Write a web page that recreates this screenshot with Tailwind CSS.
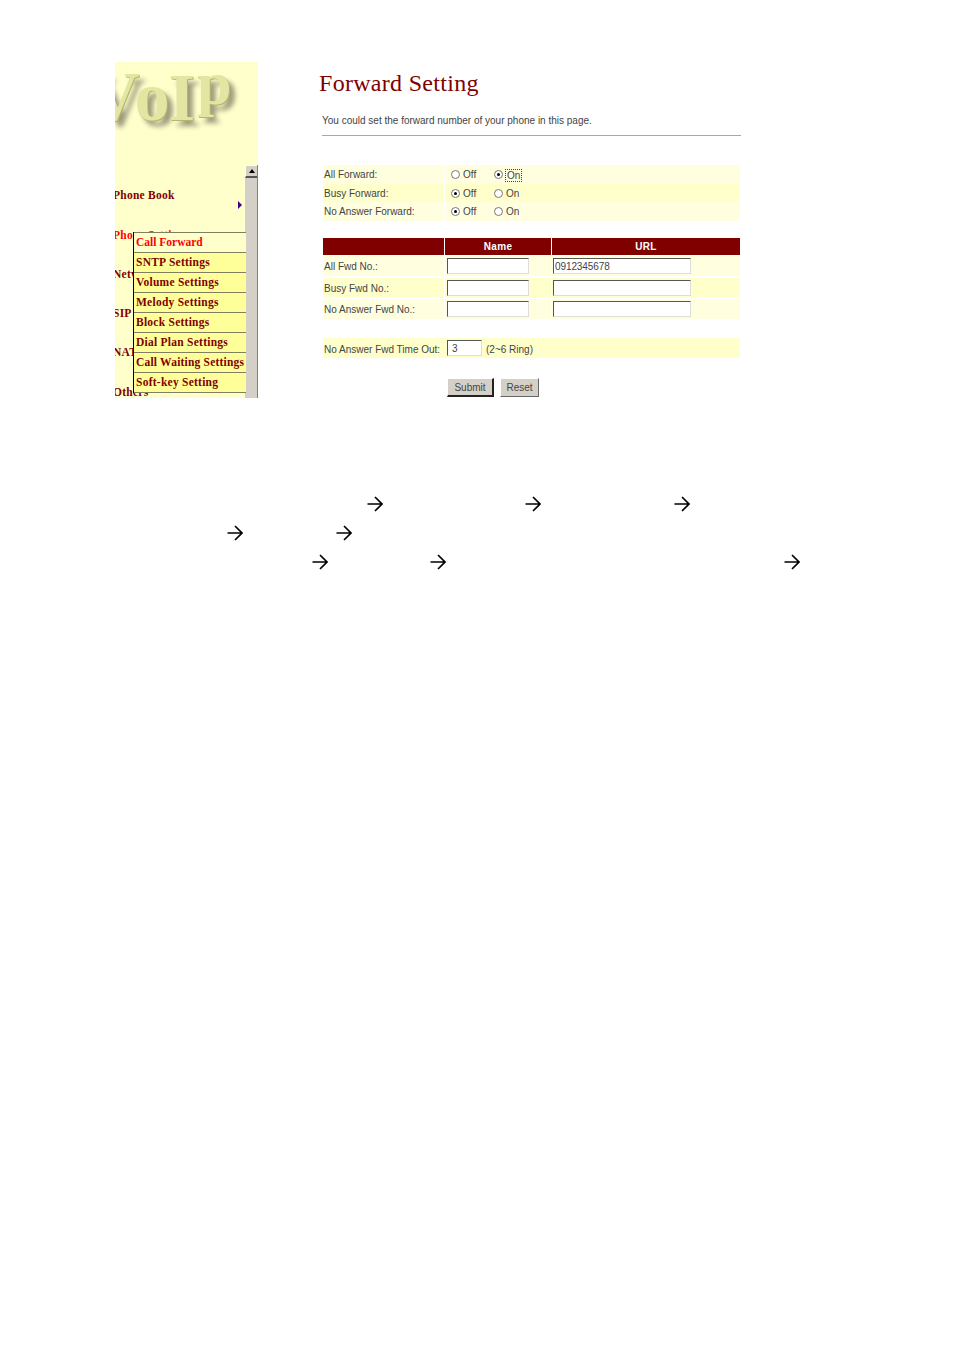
<!DOCTYPE html>
<html>
<head>
<meta charset="utf-8">
<script src="https://cdn.jsdelivr.net/npm/@tailwindcss/browser@4"></script>
</head>
<body class="bg-white w-[954px] h-[1350px] overflow-hidden font-['Liberation_Sans',Arial,sans-serif]">
<div class="flex pt-[62px] pl-[115px] h-[426px]">
  <!-- left frame -->
  <div class="relative w-[143px] h-[336px] bg-[#ffffcc] overflow-hidden font-['Liberation_Serif',serif] shrink-0">
    <div class="h-[103px] overflow-hidden">
      <div class="flex items-end h-[64px] mt-[3px] ml-[-26px] font-bold text-[#e2e6a2] [text-shadow:1px_1px_0_#b4b86c,6px_6px_5px_#9c9c7c] whitespace-nowrap">
        <span class="text-[70px] leading-[64px]">V</span>
        <span class="text-[70px] leading-[64px] -ml-[5px]">o</span>
        <span class="text-[68px] leading-[64px] -ml-[1px]">I</span>
        <span class="text-[62px] leading-[64px] ml-[2px] -translate-y-[14px]">p</span>
      </div>
    </div>
    <div class="flex flex-col ml-[-2px] text-[11.5px] font-bold leading-[14px] tracking-[0.25px] text-[#800000]">
      <div class="h-[40px] pt-[23px] box-content">Phone Book</div>
      <div class="h-[39px] text-[#ff0000]">Phone Settings</div>
      <div class="h-[39px]">Network</div>
      <div class="h-[39px]">SIP</div>
      <div class="h-[40px]">NAT</div>
      <div class="h-[14px]">Others</div>
    </div>
    <div class="absolute left-[123px] top-[139px] w-0 h-0 border-y-[4px] border-y-transparent border-l-[4px] border-l-[#400080]"></div>
    <!-- scrollbar -->
    <div class="absolute left-[130px] top-[103px] w-[13px] h-[233px] bg-[#d4d0c8] border-r border-r-[#808080] flex flex-col">
      <div class="h-[13px] bg-[#d4d0c8] border-t border-l border-t-white border-l-white border-b-2 border-b-[#555555] flex items-center justify-center">
        <span class="w-0 h-0 border-x-[3px] border-x-transparent border-b-[4px] border-b-black"></span>
      </div>
    </div>
    <!-- fly-out menu -->
    <div class="absolute left-[18px] top-[170px] w-[113px] border-l border-l-black font-bold text-[11.5px] tracking-[0.25px] text-[#800000] flex flex-col bg-[#ffff99]">
      <div class="h-[20px] border-t border-[#808060] pl-[2px] leading-[19px] bg-[#ffffcc] text-[#ff0000] tracking-normal">Call Forward</div>
      <div class="h-[20px] border-t border-[#808060] pl-[2px] leading-[19px]">SNTP Settings</div>
      <div class="h-[20px] border-t border-[#808060] pl-[2px] leading-[19px]">Volume Settings</div>
      <div class="h-[20px] border-t border-[#808060] pl-[2px] leading-[19px]">Melody Settings</div>
      <div class="h-[20px] border-t border-[#808060] pl-[2px] leading-[19px]">Block Settings</div>
      <div class="h-[20px] border-t border-[#808060] pl-[2px] leading-[19px]">Dial Plan Settings</div>
      <div class="h-[20px] border-t border-[#808060] pl-[2px] leading-[19px] whitespace-nowrap tracking-[0.2px]">Call Waiting Settings</div>
      <div class="h-[21px] border-y border-[#808060] pl-[2px] leading-[19px]">Soft-key Setting</div>
    </div>
  </div>
  <!-- right frame -->
  <div class="ml-[62px] w-[421px] text-[10px] text-[#444444]">
    <h1 class="font-['Liberation_Serif',serif] text-[24px] leading-[28px] text-[#800000] tracking-[0.3px] mt-[7px] -ml-px">Forward Setting</h1>
    <p class="mt-[17px] ml-[2px] leading-[14px]">You could set the forward number of your phone in this page.</p>
    <div class="mt-[7px] ml-[2px] h-px bg-[#a8a8a8] w-[419px]"></div>

    <div class="mt-[29px] ml-[3px] w-[417px] flex flex-col gap-px">
      <div class="grid grid-cols-[121px_1fr] gap-px h-[18px] leading-[20px]">
        <div class="bg-[#ffffe0] pl-px">All Forward:</div>
        <div class="bg-[#ffffe0] flex items-center pl-[6px]">
          <span class="w-[9px] h-[9px] rounded-full border border-[#777777] bg-white mt-[-1px]"></span><span class="ml-[3px] w-[31px]">Off</span>
          <span class="w-[9px] h-[9px] rounded-full border border-[#777777] bg-white mt-[-1px] flex items-center justify-center"><span class="w-[3px] h-[3px] rounded-full bg-black"></span></span><span class="ml-[2px] px-px h-[13px] leading-[12px] border border-dotted border-[#444444]">On</span>
        </div>
      </div>
      <div class="grid grid-cols-[121px_1fr] gap-px h-[17px] leading-[19px]">
        <div class="bg-[#ffffcc] pl-px">Busy Forward:</div>
        <div class="bg-[#ffffcc] flex items-center pl-[6px]">
          <span class="w-[9px] h-[9px] rounded-full border border-[#777777] bg-white mt-[-1px] flex items-center justify-center"><span class="w-[3px] h-[3px] rounded-full bg-black"></span></span><span class="ml-[3px] w-[31px]">Off</span>
          <span class="w-[9px] h-[9px] rounded-full border border-[#777777] bg-white mt-[-1px]"></span><span class="ml-[2px] px-px">On</span>
        </div>
      </div>
      <div class="grid grid-cols-[121px_1fr] gap-px h-[17px] leading-[19px]">
        <div class="bg-[#ffffe0] pl-px">No Answer Forward:</div>
        <div class="bg-[#ffffe0] flex items-center pl-[6px]">
          <span class="w-[9px] h-[9px] rounded-full border border-[#777777] bg-white mt-[-1px] flex items-center justify-center"><span class="w-[3px] h-[3px] rounded-full bg-black"></span></span><span class="ml-[3px] w-[31px]">Off</span>
          <span class="w-[9px] h-[9px] rounded-full border border-[#777777] bg-white mt-[-1px]"></span><span class="ml-[2px] px-px">On</span>
        </div>
      </div>
    </div>

    <div class="mt-[19px] ml-[3px] w-[417px] grid grid-cols-[121px_106px_188px] gap-x-px">
      <div class="h-[17px] bg-[#800000]"></div>
      <div class="h-[17px] bg-[#800000] text-white font-bold text-center leading-[17px] tracking-[0.35px]">Name</div>
      <div class="h-[17px] bg-[#800000] text-white font-bold text-center leading-[17px] tracking-[0.35px]">URL</div>

      <div class="mt-px h-[20px] bg-[#ffffe0] pl-px leading-[22px]">All Fwd No.:</div>
      <div class="mt-px h-[20px] bg-[#ffffe0] pl-[2px] pt-[2px]"><div class="w-[82px] h-[16px] bg-white border-t border-l border-t-[#555555] border-l-[#555555] border-r border-b border-r-[#dddddd] border-b-[#dddddd]"></div></div>
      <div class="mt-px h-[20px] bg-[#ffffe0] pl-px pt-[2px]"><div class="w-[138px] h-[16px] bg-white border-t border-l border-t-[#555555] border-l-[#555555] border-r border-b border-r-[#dddddd] border-b-[#dddddd] leading-[15px] -tracking-[0.1px] pl-px">0912345678</div></div>

      <div class="mt-[2px] h-[20px] bg-[#ffffcc] pl-px leading-[22px]">Busy Fwd No.:</div>
      <div class="mt-[2px] h-[20px] bg-[#ffffcc] pl-[2px] pt-[2px]"><div class="w-[82px] h-[16px] bg-white border-t border-l border-t-[#555555] border-l-[#555555] border-r border-b border-r-[#dddddd] border-b-[#dddddd]"></div></div>
      <div class="mt-[2px] h-[20px] bg-[#ffffcc] pl-px pt-[2px]"><div class="w-[138px] h-[16px] bg-white border-t border-l border-t-[#555555] border-l-[#555555] border-r border-b border-r-[#dddddd] border-b-[#dddddd]"></div></div>

      <div class="mt-px h-[20px] bg-[#ffffe0] pl-px leading-[22px]">No Answer Fwd No.:</div>
      <div class="mt-px h-[20px] bg-[#ffffe0] pl-[2px] pt-[2px]"><div class="w-[82px] h-[16px] bg-white border-t border-l border-t-[#555555] border-l-[#555555] border-r border-b border-r-[#dddddd] border-b-[#dddddd]"></div></div>
      <div class="mt-px h-[20px] bg-[#ffffe0] pl-px pt-[2px]"><div class="w-[138px] h-[16px] bg-white border-t border-l border-t-[#555555] border-l-[#555555] border-r border-b border-r-[#dddddd] border-b-[#dddddd]"></div></div>
    </div>

    <div class="mt-[19px] ml-[3px] w-[417px] h-[20px] bg-[#ffffcc] flex items-center">
      <div class="w-[124px] pl-px whitespace-nowrap mt-[2px]">No Answer Fwd Time Out:</div>
      <div class="w-[35px] h-[16px] bg-white border-t border-l border-t-[#555555] border-l-[#555555] border-r border-b border-r-[#dddddd] border-b-[#dddddd] leading-[16px] pl-[4px]">3</div>
      <div class="ml-[4px] mt-[3px]">(2~6 Ring)</div>
    </div>

    <div class="mt-[20px] ml-[127px] flex gap-[6px]">
      <div class="w-[47px] h-[19px] bg-[#d4d0c8] border border-t-white border-l-white border-r-2 border-b-2 border-r-[#222222] border-b-[#222222] text-center leading-[17px]">Submit</div>
      <div class="w-[39px] h-[19px] bg-[#d4d0c8] border border-t-white border-l-white border-r-[#666666] border-b-[#666666] text-center leading-[17px]">Reset</div>
    </div>
  </div>
</div>

<!-- arrows -->
<div class="flex flex-col gap-[13px] pt-[70px]">
  <div class="flex h-[16px] text-black">
    <svg class="ml-[367px]" width="16" height="16" viewBox="0 0 16 16" fill="none" stroke="currentColor" stroke-width="1.7"><path d="M0.5 8H15M8 1l7 7-7 7"/></svg>
    <svg class="ml-[142px]" width="16" height="16" viewBox="0 0 16 16" fill="none" stroke="currentColor" stroke-width="1.7"><path d="M0.5 8H15M8 1l7 7-7 7"/></svg>
    <svg class="ml-[133px]" width="16" height="16" viewBox="0 0 16 16" fill="none" stroke="currentColor" stroke-width="1.7"><path d="M0.5 8H15M8 1l7 7-7 7"/></svg>
  </div>
  <div class="flex h-[16px] text-black">
    <svg class="ml-[227px]" width="16" height="16" viewBox="0 0 16 16" fill="none" stroke="currentColor" stroke-width="1.7"><path d="M0.5 8H15M8 1l7 7-7 7"/></svg>
    <svg class="ml-[93px]" width="16" height="16" viewBox="0 0 16 16" fill="none" stroke="currentColor" stroke-width="1.7"><path d="M0.5 8H15M8 1l7 7-7 7"/></svg>
  </div>
  <div class="flex h-[16px] text-black">
    <svg class="ml-[312px]" width="16" height="16" viewBox="0 0 16 16" fill="none" stroke="currentColor" stroke-width="1.7"><path d="M0.5 8H15M8 1l7 7-7 7"/></svg>
    <svg class="ml-[102px]" width="16" height="16" viewBox="0 0 16 16" fill="none" stroke="currentColor" stroke-width="1.7"><path d="M0.5 8H15M8 1l7 7-7 7"/></svg>
    <svg class="ml-[338px]" width="16" height="16" viewBox="0 0 16 16" fill="none" stroke="currentColor" stroke-width="1.7"><path d="M0.5 8H15M8 1l7 7-7 7"/></svg>
  </div>
</div>
</body>
</html>
